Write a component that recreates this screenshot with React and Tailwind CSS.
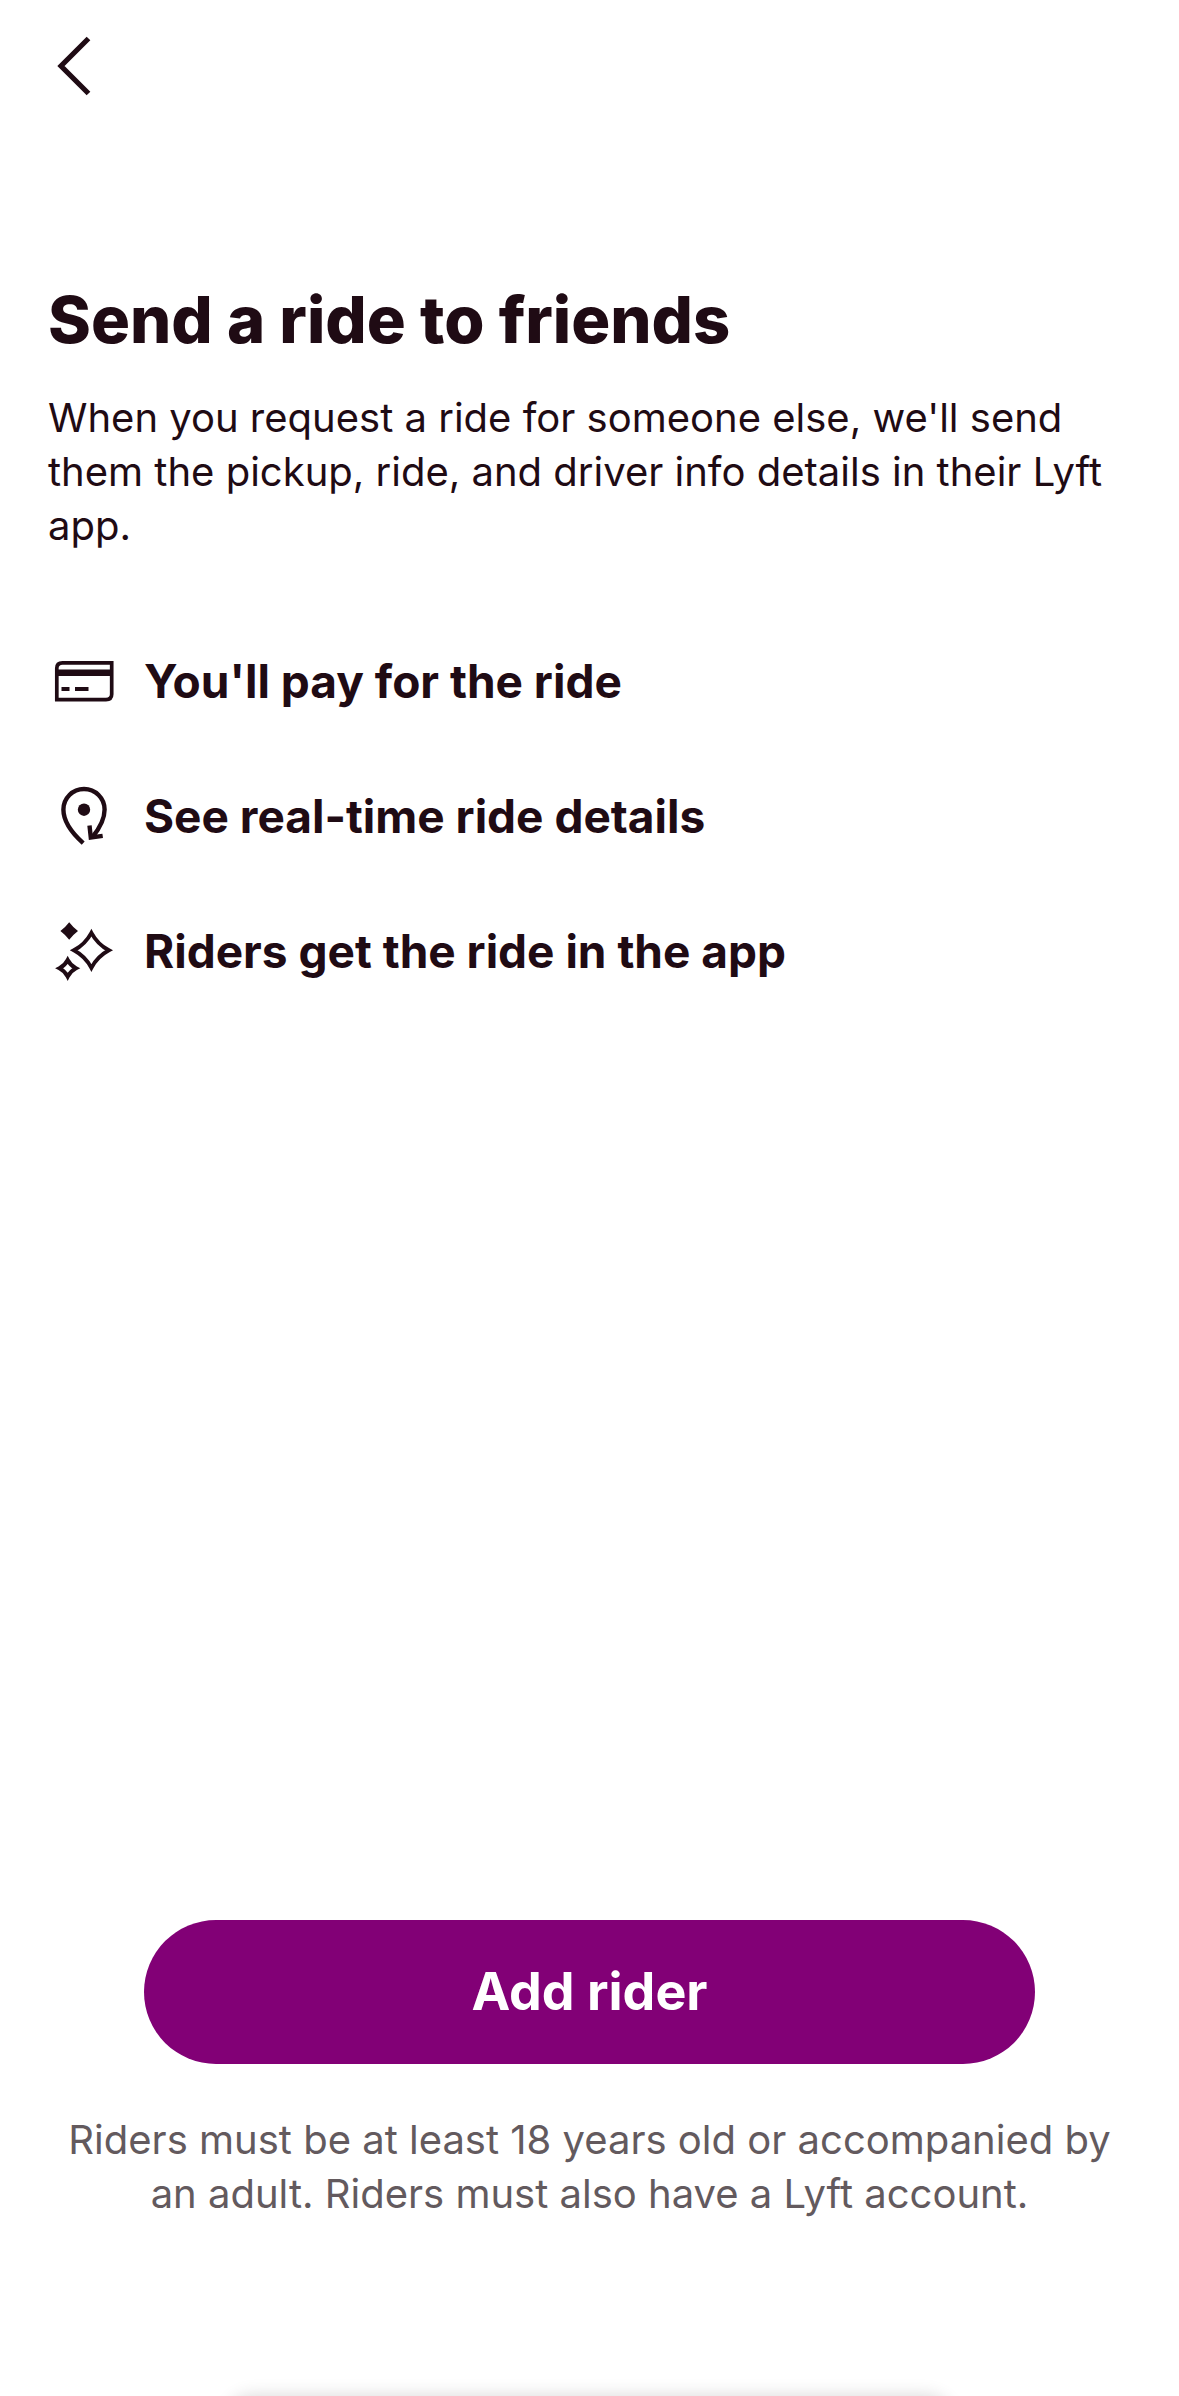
function BackIcon() {
  return (
    <svg viewBox="0 0 72 72" className="size-[72px]" fill="none" stroke="currentColor" strokeWidth="5.2" aria-hidden="true">
      <path d="M52.500 8.500 25 36l27.500 27.500" />
    </svg>
  );
}

function CardIcon() {
  return (
    <svg viewBox="0 0 72 72" className="size-[72px] shrink-0" fill="none" stroke="currentColor" aria-hidden="true">
      <path d="M14.500 17.800H63.700V49.300Q63.700 54.600 58 54.600H8.800V23.200Q8.800 17.800 14.500 17.800Z" strokeWidth="3.700" />
      <path d="M8 27.800H65" strokeWidth="6.500" />
      <path d="M13.500 44H21.500M27 44H40.500" strokeWidth="4" />
    </svg>
  );
}

function PinIcon() {
  return (
    <svg viewBox="0 0 72 72" className="size-[72px] shrink-0" fill="none" stroke="currentColor" strokeWidth="4.400" aria-hidden="true">
      <path d="M35.200 63.200C26 55 15.400 43 15.400 29.600A20.600 20.600 0 0 1 56.600 29.600C56.600 38.800 51.500 48.500 44.500 57" />
      <path d="M41.500 45.500 42.800 57.500 54.700 55.900" />
      <circle cx="36" cy="29.700" r="6.200" fill="currentColor" stroke="none" />
    </svg>
  );
}

function SparklesIcon() {
  return (
    <svg viewBox="0 0 72 72" className="size-[72px] shrink-0" fill="none" stroke="currentColor" strokeWidth="3.900" strokeMiterlimit="10" aria-hidden="true">
      <path d="M43.400 17.800Q49.500 29.200 60.900 35.300Q49.500 41.400 43.400 52.800Q37.300 41.400 25.900 35.300Q37.300 29.200 43.400 17.800Z" />
      <path d="M19.700 45Q22.500 50.500 28 53.300Q22.500 56.100 19.700 61.600Q16.900 56.100 11.400 53.300Q16.900 50.500 19.700 45Z" />
      <path d="M21.200 7.200Q25 12.200 30 16Q25 19.800 21.200 24.800Q17.400 19.800 12.400 16Q17.400 12.200 21.200 7.200Z" fill="currentColor" stroke="none" />
    </svg>
  );
}

const features = [
  { icon: CardIcon, label: "You'll pay for the ride" },
  { icon: PinIcon, label: "See real-time ride details" },
  { icon: SparklesIcon, label: "Riders get the ride in the app" },
];

export default function App() {
  return (
    <div className="relative flex min-h-screen flex-col overflow-hidden bg-white font-['Inter',sans-serif] text-[#1f0b14]">
      <header className="px-9 pt-[30px]">
        <button type="button" aria-label="Back" className="block">
          <BackIcon />
        </button>
      </header>

      <main className="px-12 pt-[178px]">
        <h1 className="text-[65px] leading-[80px] font-extrabold">Send a ride to friends</h1>
        <p className="mt-[31px] text-[40px] leading-[54px]">
          When you request a ride for someone else, we'll send them the pickup, ride, and driver info details in their Lyft app.
        </p>
        <ul className="mt-[92px] flex flex-col gap-[63px]">
          {features.map(({ icon: Icon, label }) => (
            <li key={label} className="flex items-center gap-6">
              <Icon />
              <span className="text-[46px] leading-[72px] font-bold">{label}</span>
            </li>
          ))}
        </ul>
      </main>

      <footer className="mt-auto px-12 pt-12 pb-[175px]">
        <div className="px-24">
          <button type="button" className="h-36 w-full rounded-full bg-[#820076] text-[52px] leading-[72px] font-bold text-white">
            Add rider
          </button>
        </div>
        <p className="mt-[49px] text-center text-[40px] leading-[54px] text-[#635a5e]">
          Riders must be at least 18 years old or accompanied by an adult. Riders must also have a Lyft account.
        </p>
      </footer>

      <div className="absolute inset-x-[228px] top-full h-12 rounded-t-3xl shadow-[0_0_18px_rgba(0,0,0,0.16)]" />
    </div>
  );
}
